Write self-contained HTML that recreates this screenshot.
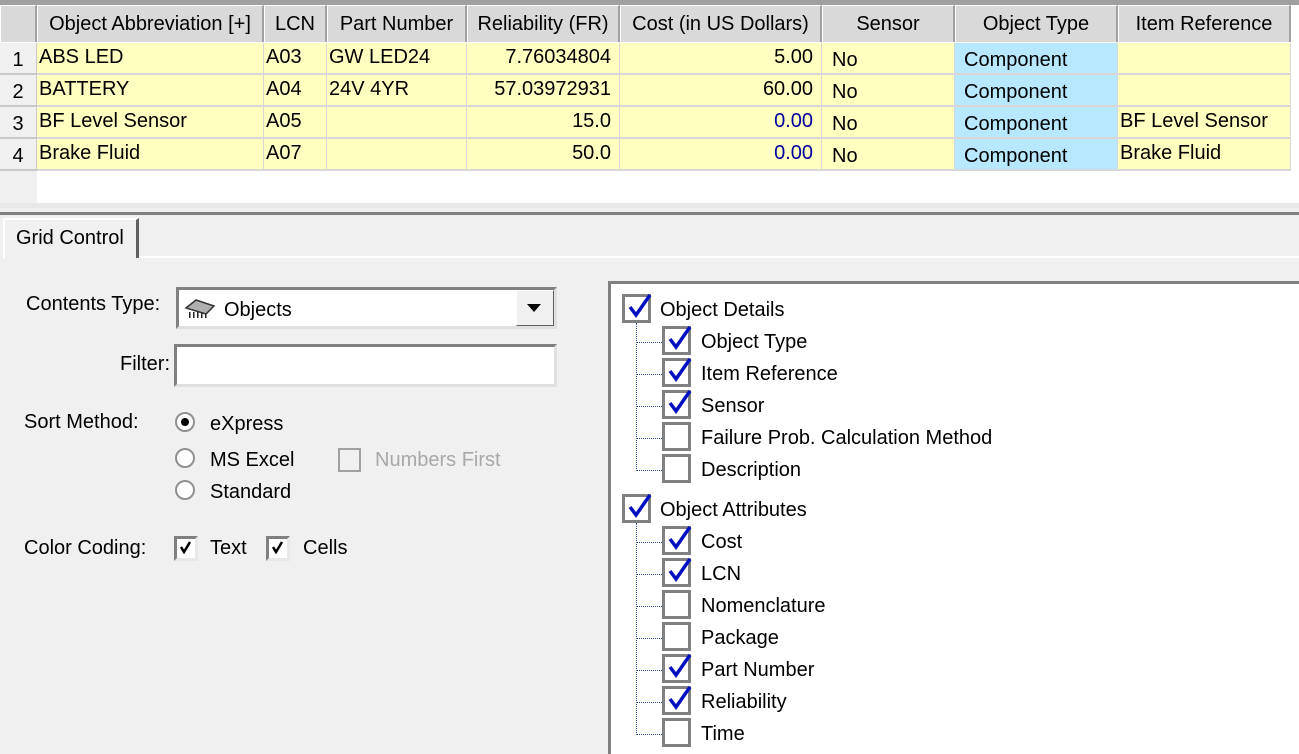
<!DOCTYPE html>
<html><head><meta charset="utf-8"><style>
*{box-sizing:border-box;margin:0;padding:0}
body{width:1299px;height:754px;overflow:hidden;background:#f0f0f0;font-family:"Liberation Sans",Arial,sans-serif;font-size:20px;color:#000;position:relative}
.a{position:absolute;white-space:nowrap}
.hd{position:absolute;top:5px;height:37px;background:#d9d9d9;border-right:2px solid #a0a0a0;border-left:1px solid #fff;border-top:1px solid #fff;line-height:36px;text-align:center}
.c{position:absolute;height:32px;border-right:1px solid #d8d8d8;border-bottom:2px solid #d8d8d8;line-height:30px;padding:0 2px;background:#ffffc0}
.rn{position:absolute;left:0;width:37px;height:32px;background:#f0f0f0;border-bottom:2px solid #c8c8c8;border-right:1px solid #c8c8c8;text-align:center;line-height:34px}
.cb{position:absolute;width:29px;height:29px;border:3px solid #808080;background:#fff}
.cb svg{position:absolute;left:2px;top:-6px}
.dl{position:absolute;border-top:1px dotted #3050a0}
.dv{position:absolute;border-left:1px dotted #3050a0}
</style></head><body>
<div class="a" style="left:0;top:0;width:1299px;height:5px;background:#a0a0a0"></div>
<div class="a" style="left:0;top:5px;width:1299px;height:200px;background:#fff"></div>
<div class="hd" style="left:0;width:37px"></div>
<div class="hd" style="left:37px;width:227px">Object Abbreviation [+]</div>
<div class="hd" style="left:264px;width:63px">LCN</div>
<div class="hd" style="left:327px;width:140px">Part Number</div>
<div class="hd" style="left:467px;width:153px">Reliability (FR)</div>
<div class="hd" style="left:620px;width:202px">Cost (in US Dollars)</div>
<div class="hd" style="left:822px;width:133px">Sensor</div>
<div class="hd" style="left:955px;width:163px">Object Type</div>
<div class="hd" style="left:1118px;width:173px">Item Reference</div>

<div class="rn" style="top:43px">1</div>
<div class="rn" style="top:75px">2</div>
<div class="rn" style="top:107px">3</div>
<div class="rn" style="top:139px">4</div>
<div class="a" style="left:0;top:171px;width:37px;height:32px;background:#f0f0f0"></div>

<div class="c" style="left:37px;top:43px;width:227px;line-height:28px">ABS LED</div>
<div class="c" style="left:264px;top:43px;width:63px;line-height:28px">A03</div>
<div class="c" style="left:327px;top:43px;width:140px;line-height:28px">GW LED24</div>
<div class="c" style="left:467px;top:43px;width:153px;text-align:right;padding-right:8px;line-height:28px">7.76034804</div>
<div class="c" style="left:620px;top:43px;width:202px;text-align:right;padding-right:8px;line-height:28px">5.00</div>
<div class="c" style="left:822px;top:43px;width:133px;padding-left:10px;line-height:34px">No</div>
<div class="c" style="left:955px;top:43px;width:163px;background:#b8e8ff;padding-left:9px;line-height:34px">Component</div>
<div class="c" style="left:1118px;top:43px;width:173px"></div>

<div class="c" style="left:37px;top:75px;width:227px;line-height:28px">BATTERY</div>
<div class="c" style="left:264px;top:75px;width:63px;line-height:28px">A04</div>
<div class="c" style="left:327px;top:75px;width:140px;line-height:28px">24V 4YR</div>
<div class="c" style="left:467px;top:75px;width:153px;text-align:right;padding-right:8px;line-height:28px">57.03972931</div>
<div class="c" style="left:620px;top:75px;width:202px;text-align:right;padding-right:8px;line-height:28px">60.00</div>
<div class="c" style="left:822px;top:75px;width:133px;padding-left:10px;line-height:34px">No</div>
<div class="c" style="left:955px;top:75px;width:163px;background:#b8e8ff;padding-left:9px;line-height:34px">Component</div>
<div class="c" style="left:1118px;top:75px;width:173px"></div>

<div class="c" style="left:37px;top:107px;width:227px;line-height:28px">BF Level Sensor</div>
<div class="c" style="left:264px;top:107px;width:63px;line-height:28px">A05</div>
<div class="c" style="left:327px;top:107px;width:140px"></div>
<div class="c" style="left:467px;top:107px;width:153px;text-align:right;padding-right:8px;line-height:28px">15.0</div>
<div class="c" style="left:620px;top:107px;width:202px;text-align:right;padding-right:8px;line-height:28px;color:#0000a0">0.00</div>
<div class="c" style="left:822px;top:107px;width:133px;padding-left:10px;line-height:34px">No</div>
<div class="c" style="left:955px;top:107px;width:163px;background:#b8e8ff;padding-left:9px;line-height:34px">Component</div>
<div class="c" style="left:1118px;top:107px;width:173px;line-height:28px">BF Level Sensor</div>

<div class="c" style="left:37px;top:139px;width:227px;line-height:28px">Brake Fluid</div>
<div class="c" style="left:264px;top:139px;width:63px;line-height:28px">A07</div>
<div class="c" style="left:327px;top:139px;width:140px"></div>
<div class="c" style="left:467px;top:139px;width:153px;text-align:right;padding-right:8px;line-height:28px">50.0</div>
<div class="c" style="left:620px;top:139px;width:202px;text-align:right;padding-right:8px;line-height:28px;color:#0000a0">0.00</div>
<div class="c" style="left:822px;top:139px;width:133px;padding-left:10px;line-height:34px">No</div>
<div class="c" style="left:955px;top:139px;width:163px;background:#b8e8ff;padding-left:9px;line-height:34px">Component</div>
<div class="c" style="left:1118px;top:139px;width:173px;line-height:28px">Brake Fluid</div>

<div class="a" style="left:0;top:203px;width:1299px;height:5px;background:#e8e8e8"></div>
<div class="a" style="left:0;top:208px;width:1299px;height:3px;background:#f0f0f0"></div>
<div class="a" style="left:0;top:212px;width:1299px;height:3px;background:#808080"></div>

<div class="a" style="left:3px;top:218px;width:136px;height:40px;border-top:2px solid #fff;border-left:2px solid #fff;border-right:3px solid #606060;padding:7px 0 0 11px">Grid Control</div>
<div class="a" style="left:139px;top:256px;width:1160px;height:2px;background:#fff"></div>

<div class="a" style="left:26px;top:293px">Contents Type:</div>
<div class="a" style="left:176px;top:287px;width:381px;height:42px;background:#fff;border:3px solid #808080;border-right-color:#e0e0e0;border-bottom-color:#e0e0e0"></div>
<svg class="a" style="left:184px;top:298px" width="32" height="22" viewBox="0 0 32 22"><g fill="#222"><rect x="5" y="14" width="1.5" height="6"/><rect x="9" y="14" width="1.5" height="6"/><rect x="13" y="14" width="1.5" height="6"/><rect x="17" y="14" width="1.5" height="6"/><rect x="21" y="14" width="1.5" height="6"/></g><path d="M2 10 L12 2 L30 8 L22 16 Z" fill="#b0b0b0" stroke="#333" stroke-width="1.5"/></svg>
<div class="a" style="left:224px;top:299px">Objects</div>
<div class="a" style="left:516px;top:290px;width:38px;height:36px;background:#f0f0f0;border:1px solid #fff;border-right-color:#606060;border-bottom-color:#606060"></div>
<svg class="a" style="left:527px;top:304px" width="16" height="9"><path d="M0 0 H14 L7 8 Z" fill="#000"/></svg>

<div class="a" style="left:120px;top:353px">Filter:</div>
<div class="a" style="left:174px;top:344px;width:383px;height:43px;background:#fff;border:3px solid #808080;border-right-color:#e0e0e0;border-bottom-color:#e0e0e0"></div>

<div class="a" style="left:24px;top:411px">Sort Method:</div>
<svg class="a" style="left:175px;top:412px" width="22" height="22"><circle cx="10" cy="10" r="9" fill="#fff" stroke="#909090" stroke-width="2"/><circle cx="10" cy="10" r="4" fill="#000"/></svg>
<div class="a" style="left:210px;top:413px">eXpress</div>
<svg class="a" style="left:175px;top:448px" width="22" height="22"><circle cx="10" cy="10" r="9" fill="#fff" stroke="#909090" stroke-width="2"/></svg>
<div class="a" style="left:210px;top:449px">MS Excel</div>
<div class="a" style="left:338px;top:448px;width:23px;height:24px;border:2px solid #a0a0a0;background:#f0f0f0"></div>
<div class="a" style="left:375px;top:449px;color:#a8a8a8">Numbers First</div>
<svg class="a" style="left:175px;top:480px" width="22" height="22"><circle cx="10" cy="10" r="9" fill="#fff" stroke="#909090" stroke-width="2"/></svg>
<div class="a" style="left:210px;top:481px">Standard</div>

<div class="a" style="left:24px;top:537px">Color Coding:</div>
<div class="a" style="left:174px;top:536px;width:24px;height:25px;border:3px solid #808080;border-right-color:#e8e8e8;border-bottom-color:#e8e8e8;background:#fff"></div>
<svg class="a" style="left:178px;top:540px" width="16" height="16"><path d="M3 7 L6 12 L12 2" fill="none" stroke="#000" stroke-width="2.5"/></svg>
<div class="a" style="left:210px;top:537px">Text</div>
<div class="a" style="left:266px;top:536px;width:24px;height:25px;border:3px solid #808080;border-right-color:#e8e8e8;border-bottom-color:#e8e8e8;background:#fff"></div>
<svg class="a" style="left:270px;top:540px" width="16" height="16"><path d="M3 7 L6 12 L12 2" fill="none" stroke="#000" stroke-width="2.5"/></svg>
<div class="a" style="left:303px;top:537px">Cells</div>

<div class="a" style="left:608px;top:281px;width:691px;height:473px;background:#fff;border-left:3px solid #808080;border-top:3px solid #808080"></div>

<div class="dv" style="left:636px;top:323px;height:148px"></div>
<div class="dl" style="left:636px;top:342px;width:26px"></div>
<div class="dl" style="left:636px;top:374px;width:26px"></div>
<div class="dl" style="left:636px;top:406px;width:26px"></div>
<div class="dl" style="left:636px;top:438px;width:26px"></div>
<div class="dl" style="left:636px;top:470px;width:26px"></div>
<div class="dv" style="left:636px;top:523px;height:212px"></div>
<div class="dl" style="left:636px;top:542px;width:26px"></div>
<div class="dl" style="left:636px;top:574px;width:26px"></div>
<div class="dl" style="left:636px;top:606px;width:26px"></div>
<div class="dl" style="left:636px;top:638px;width:26px"></div>
<div class="dl" style="left:636px;top:670px;width:26px"></div>
<div class="dl" style="left:636px;top:702px;width:26px"></div>
<div class="dl" style="left:636px;top:734px;width:26px"></div>

<!-- check template -->
<div class="cb" style="left:622px;top:294px"><svg width="26" height="30"><path d="M3 16 L9 24 L23 4" fill="none" stroke="#0010c0" stroke-width="3.5"/></svg></div>
<div class="a" style="left:660px;top:299px">Object Details</div>
<div class="cb" style="left:662px;top:326px"><svg width="26" height="30"><path d="M3 16 L9 24 L23 4" fill="none" stroke="#0010c0" stroke-width="3.5"/></svg></div>
<div class="a" style="left:701px;top:331px">Object Type</div>
<div class="cb" style="left:662px;top:358px"><svg width="26" height="30"><path d="M3 16 L9 24 L23 4" fill="none" stroke="#0010c0" stroke-width="3.5"/></svg></div>
<div class="a" style="left:701px;top:363px">Item Reference</div>
<div class="cb" style="left:662px;top:390px"><svg width="26" height="30"><path d="M3 16 L9 24 L23 4" fill="none" stroke="#0010c0" stroke-width="3.5"/></svg></div>
<div class="a" style="left:701px;top:395px">Sensor</div>
<div class="cb" style="left:662px;top:422px"></div>
<div class="a" style="left:701px;top:427px">Failure Prob. Calculation Method</div>
<div class="cb" style="left:662px;top:454px"></div>
<div class="a" style="left:701px;top:459px">Description</div>

<div class="cb" style="left:622px;top:494px"><svg width="26" height="30"><path d="M3 16 L9 24 L23 4" fill="none" stroke="#0010c0" stroke-width="3.5"/></svg></div>
<div class="a" style="left:660px;top:499px">Object Attributes</div>
<div class="cb" style="left:662px;top:526px"><svg width="26" height="30"><path d="M3 16 L9 24 L23 4" fill="none" stroke="#0010c0" stroke-width="3.5"/></svg></div>
<div class="a" style="left:701px;top:531px">Cost</div>
<div class="cb" style="left:662px;top:558px"><svg width="26" height="30"><path d="M3 16 L9 24 L23 4" fill="none" stroke="#0010c0" stroke-width="3.5"/></svg></div>
<div class="a" style="left:701px;top:563px">LCN</div>
<div class="cb" style="left:662px;top:590px"></div>
<div class="a" style="left:701px;top:595px">Nomenclature</div>
<div class="cb" style="left:662px;top:622px"></div>
<div class="a" style="left:701px;top:627px">Package</div>
<div class="cb" style="left:662px;top:654px"><svg width="26" height="30"><path d="M3 16 L9 24 L23 4" fill="none" stroke="#0010c0" stroke-width="3.5"/></svg></div>
<div class="a" style="left:701px;top:659px">Part Number</div>
<div class="cb" style="left:662px;top:686px"><svg width="26" height="30"><path d="M3 16 L9 24 L23 4" fill="none" stroke="#0010c0" stroke-width="3.5"/></svg></div>
<div class="a" style="left:701px;top:691px">Reliability</div>
<div class="cb" style="left:662px;top:718px"></div>
<div class="a" style="left:701px;top:723px">Time</div>
</body></html>
